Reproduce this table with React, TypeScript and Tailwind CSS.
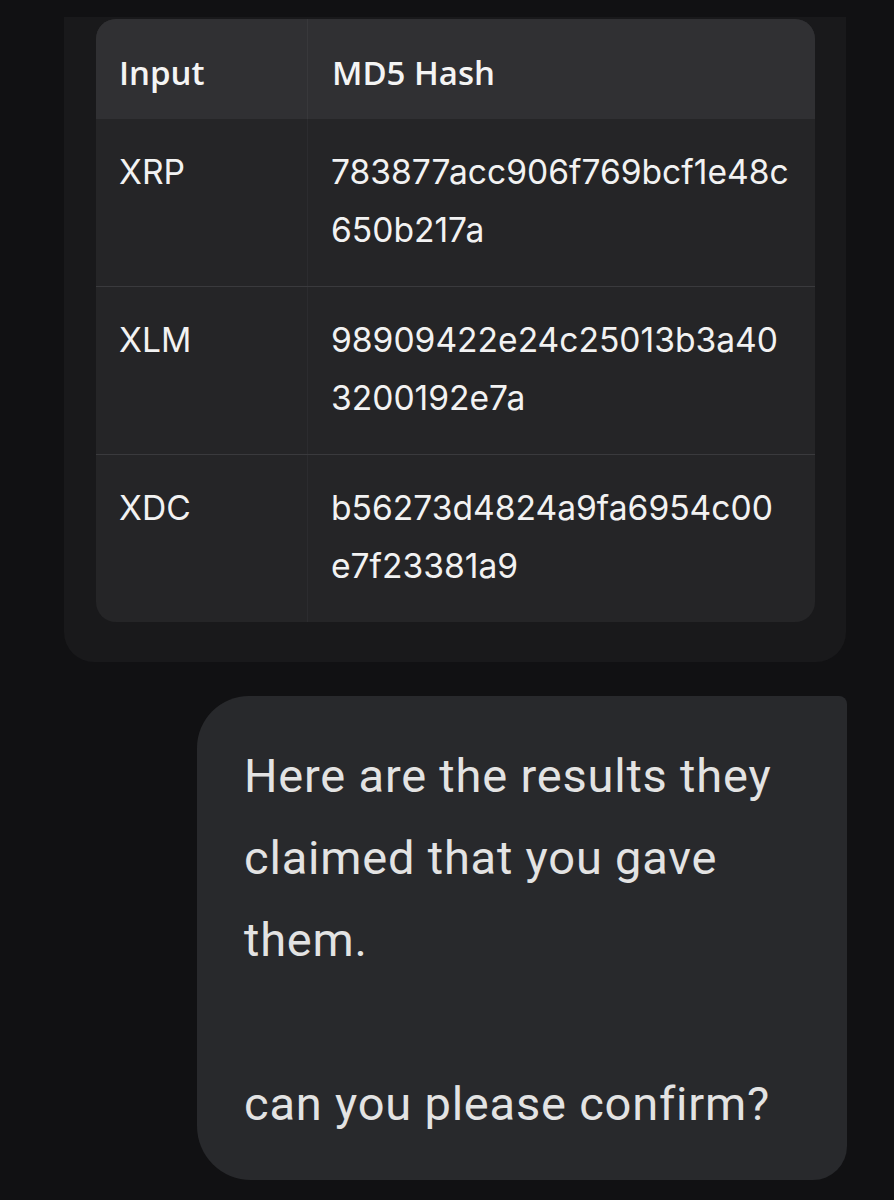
const rows = [
  { input: 'XRP', hash: ['783877acc906f769bcf1e48c', '650b217a'] },
  { input: 'XLM', hash: ['98909422e24c25013b3a40', '3200192e7a'] },
  { input: 'XDC', hash: ['b56273d4824a9fa6954c00', 'e7f23381a9'] },
];

const bubbleLines = ['Here are the results they', 'claimed that you gave', 'them.', '\u00a0', 'can you please confirm?'];

export default function App() {
  return (
    <div className="min-h-[1200px] w-[894px] bg-[#111113] pt-[17px] overflow-hidden">
      {/* model response panel */}
      <div className="ml-[64px] w-[782px] bg-[#19191b] rounded-b-[30px] pt-[2px] pb-[40px] pl-[32px] pr-[31px]">
        <div className="rounded-[20px] overflow-hidden bg-[#252527]">
          <div className="flex h-[100px] bg-[#303033] text-[#f4f4f4] font-['Open_Sans',sans-serif] text-[33px] font-semibold leading-[45px]">
            <div className="w-[212px] shrink-0 pl-[23px] pt-[31px] border-r border-[#38383b]">Input</div>
            <div className="flex-1 pl-[24px] pt-[31px]">MD5 Hash</div>
          </div>
          {rows.map((r, i) => (
            <div
              key={r.input}
              className={`flex text-[#f2f2f2] font-['Inter',sans-serif] text-[33.6px] leading-[58px] ${i > 0 ? 'border-t border-[#3a3a3d]' : ''}`}
            >
              <div className="w-[212px] shrink-0 pl-[23px] pt-[24px] pb-[27px] border-r border-[#2c2c2f]">{r.input}</div>
              <div className="flex-1 pl-[23px] pt-[24px] pb-[27px]">
                {r.hash.map((h) => (
                  <div key={h}>{h}</div>
                ))}
              </div>
            </div>
          ))}
        </div>
      </div>

      {/* user bubble */}
      <div className="mt-[34px] ml-[197px] w-[650px] bg-[#28292c] rounded-tl-[52px] rounded-bl-[54px] rounded-br-[34px] rounded-tr-[8px] pl-[47px] pt-[39px] pb-[35px] text-[#e3e3e3] font-['Roboto',sans-serif] text-[47px] leading-[82px] tracking-[0.8px]">
        {bubbleLines.map((l, i) => (
          <div key={i}>{l}</div>
        ))}
      </div>
    </div>
  );
}
